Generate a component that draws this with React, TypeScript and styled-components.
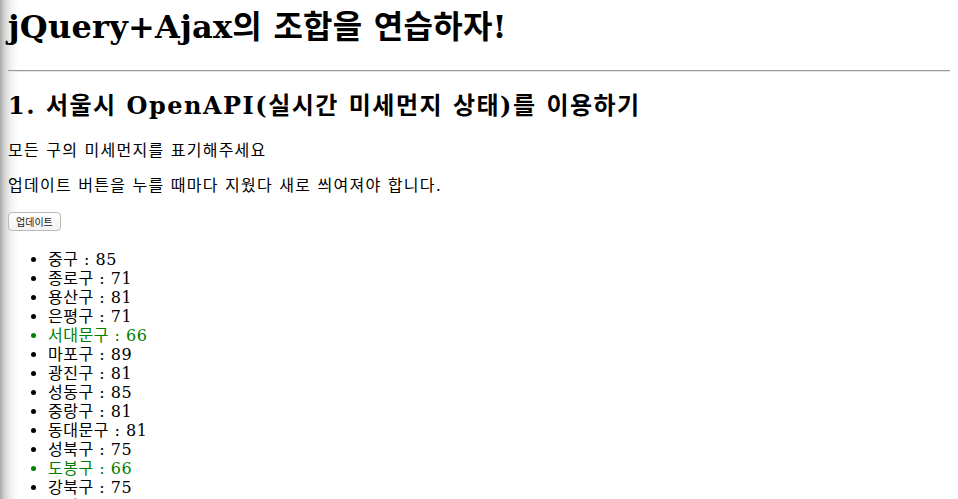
import React from "react";
import styled, { createGlobalStyle } from "styled-components";

const GlobalStyle = createGlobalStyle`
  html, body {
    margin: 0;
    padding: 0;
  }
  body {
    padding: 0 8px;
    background: linear-gradient(to right, #a9a9a9 0, #d6d6d6 5px, #f1f1f1 11px, #fff 18px) no-repeat;
    background-attachment: fixed;
    min-height: 100vh;
    color: #000;
    font-family: "DejaVu Serif", "Noto Sans CJK KR", serif;
  }
`;

const Title = styled.h1`
  font-size: 32px;
  line-height: 37px;
  font-weight: bold;
  letter-spacing: 0.25px;
  margin: 9px 0 0;
`;

const Rule = styled.hr`
  margin: 24px 0 0;
  border: 0;
  border-top: 1px solid #9a9a9a;
  border-bottom: 1px solid #e4e4e4;
  height: 0;
`;

const SubTitle = styled.h2`
  font-size: 24px;
  line-height: 28px;
  font-weight: bold;
  letter-spacing: 1.5px;
  margin: 20px 0 0;
`;

const Text = styled.p<{ $first?: boolean }>`
  font-size: 16px;
  line-height: 19px;
  letter-spacing: 1.25px;
  margin: ${(p) => (p.$first ? "21px" : "16px")} 0 0;
`;

const UpdateButton = styled.button`
  margin-top: 17px;
  display: block;
  font-family: "Noto Sans CJK KR", sans-serif;
  font-size: 10px;
  line-height: 14px;
  padding: 2px 7px;
  height: 19px;
  color: #222;
  background: linear-gradient(#ffffff, #f2f2f2);
  border: 1px solid #b9b9b9;
  border-radius: 4px;
`;

const List = styled.ul`
  margin: 19px 0 0;
  padding-left: 40px;
`;

const Item = styled.li<{ $good?: boolean }>`
  font-size: 16px;
  line-height: 19px;
  letter-spacing: 0.5px;
  color: ${(p) => (p.$good ? "#008000" : "#000")};
`;

const districts: [string, number][] = [
  ["중구", 85],
  ["종로구", 71],
  ["용산구", 81],
  ["은평구", 71],
  ["서대문구", 66],
  ["마포구", 89],
  ["광진구", 81],
  ["성동구", 85],
  ["중랑구", 81],
  ["동대문구", 81],
  ["성북구", 75],
  ["도봉구", 66],
  ["강북구", 75],
  ["노원구", 71],
  ["강서구", 78],
  ["구로구", 82],
];

export default function App() {
  return (
    <>
      <GlobalStyle />
      <Title>jQuery+Ajax의 조합을 연습하자!</Title>
      <Rule />
      <SubTitle>1. 서울시 OpenAPI(실시간 미세먼지 상태)를 이용하기</SubTitle>
      <Text $first>모든 구의 미세먼지를 표기해주세요</Text>
      <Text>업데이트 버튼을 누를 때마다 지웠다 새로 씌여져야 합니다.</Text>
      <UpdateButton>업데이트</UpdateButton>
      <List>
        {districts.map(([name, value]) => (
          <Item key={name} $good={value < 70}>
            {name} : {value}
          </Item>
        ))}
      </List>
    </>
  );
}
